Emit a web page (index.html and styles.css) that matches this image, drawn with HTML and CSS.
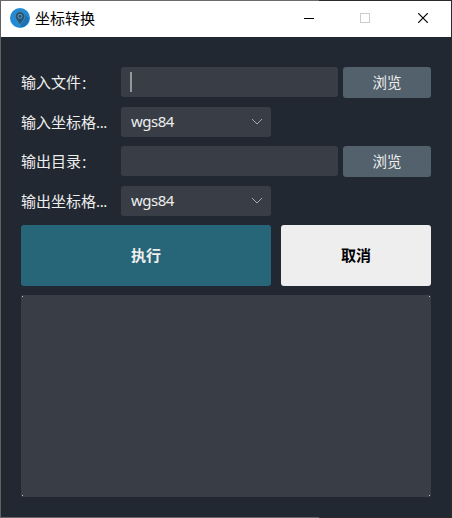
FILE: index.html
```html
<!DOCTYPE html>
<html lang="zh-CN">
<head>
<meta charset="utf-8">
<title>坐标转换</title>
<link rel="stylesheet" href="styles.css">
</head>
<body>
<div class="window">
  <header class="titlebar">
    <svg class="app-icon" width="20" height="20" viewBox="0 0 20 20">
      <circle cx="10" cy="10" r="10" fill="#218bd5"/>
      <path d="M14 5 19 10.5A10 10 0 0 1 12 19.6L10 17Z" fill="#1d71b4"/>
      <path d="M10 16.8C8.2 14 5.2 11.300 5.200 8.300a4.800 4.800 0 0 1 9.600 0C14.800 11.300 11.800 14 10 16.800Z" fill="#245577" stroke="#4d8fb8" stroke-width=".8"/>
      <circle cx="10" cy="8.300" r="2" fill="#245577" stroke="#73a0ba" stroke-width=".9"/>
    </svg>
    <h1 class="title">坐标转换</h1>
    <div class="controls">
      <svg width="10" height="10" viewBox="0 0 10 10"><path d="M0 5.500H10" stroke="#000"/></svg>
      <svg width="10" height="10" viewBox="0 0 10 10"><rect x=".5" y=".5" width="9" height="9" fill="none" stroke="#ccc"/></svg>
      <svg class="close" width="10" height="10" viewBox="0 0 10 10"><path d="M.2.2 9.800 9.800M9.800.2.2 9.800" stroke="#000" stroke-width="1.200"/></svg>
    </div>
  </header>
  <main class="form">
    <div class="row">
      <span class="label">输入文件<span class="colon">：</span></span>
      <div class="field"><span class="caret"></span></div>
      <button class="browse">浏览</button>
    </div>
    <div class="row">
      <span class="label">输入坐标格<span class="ellipsis">...</span></span>
      <div class="select"><span class="value">wgs84</span><svg width="12" height="8" viewBox="0 0 12 8"><path d="M1 1 6 6 11 1" fill="none" stroke="#a5a8ad"/></svg></div>
    </div>
    <div class="row">
      <span class="label">输出目录<span class="colon">：</span></span>
      <div class="field"></div>
      <button class="browse">浏览</button>
    </div>
    <div class="row">
      <span class="label">输出坐标格<span class="ellipsis">...</span></span>
      <div class="select"><span class="value">wgs84</span><svg width="12" height="8" viewBox="0 0 12 8"><path d="M1 1 6 6 11 1" fill="none" stroke="#a5a8ad"/></svg></div>
    </div>
    <div class="actions">
      <button class="run">执行</button>
      <button class="cancel">取消</button>
    </div>
    <div class="log">
      <i class="dot"></i><i class="dot"></i><i class="dot"></i><i class="dot"></i>
    </div>
  </main>
</div>
</body>
</html>
```
FILE: styles.css
```css
* { box-sizing: border-box; }
body {
  margin: 0;
  font: 15px/20px "Noto Sans", "Noto Sans CJK SC", sans-serif;
  color: #eee;
}
.window {
  width: 452px;
  height: 518px;
  padding: 1px;
  background:
    linear-gradient(#6b6b6b, #6b6b6b) 0 0 / 319px 1px no-repeat,
    linear-gradient(#666, #666) 0 100% / 319px 1px no-repeat,
    linear-gradient(#606060, #606060) 0 0 / 1px 100% no-repeat,
    #2b2a2c;
}
.titlebar {
  display: flex;
  align-items: center;
  height: 36px;
  padding: 0 23px 0 9px;
  background: #fff;
  color: #000;
}
.app-icon { margin-top: -2px; }
.title {
  margin: 0 auto 2px 5px;
  font-size: 15px;
  font-weight: 400;
}
.controls { display: flex; gap: 46px; margin-bottom: 2px; }
.controls svg { display: block; }
.close { margin-left: 2px; }
.form {
  display: flex;
  flex-direction: column;
  gap: 9px;
  height: 480px;
  padding: 30px 20px 20px;
  background: #222831;
}
.row { display: flex; height: 30px; }
.row:nth-child(odd) { height: 31px; }
.label {
  width: 100px;
  padding-top: 5px;
  white-space: nowrap;
}
.colon { font-size: 13px; }
.ellipsis { letter-spacing: -0.4px; }
.field, .select {
  display: flex;
  align-items: center;
  height: 30px;
  padding: 0 8px 0 10px;
  border-radius: 3px;
  background: #393e46;
}
.field { width: 217px; margin-right: 5px; padding-left: 9px; }
.select { width: 150px; justify-content: space-between; }
.value {
  padding-bottom: 2px;
  letter-spacing: -0.5px;
}
.caret { width: 2px; height: 20px; background: #93969a; }
button {
  padding: 0 0 2px;
  border: 0;
  border-radius: 3px;
  font: inherit;
  color: #eee;
}
.browse { width: 88px; height: 31px; background: #52616b; font-size: 14.5px; }
.actions { display: flex; gap: 10px; height: 61px; }
.run, .cancel { font-weight: 700; }
.run { width: 250px; background: #276678; }
.cancel { width: 150px; background: #eee; color: #000; }
.log {
  display: grid;
  grid-template-columns: 1px 1px;
  justify-content: space-between;
  align-content: space-between;
  height: 202px;
  padding: 1px;
  border-radius: 2px;
  background: #393e46;
}
.dot { width: 1px; height: 1px; background: #c5c7c9; }
```
